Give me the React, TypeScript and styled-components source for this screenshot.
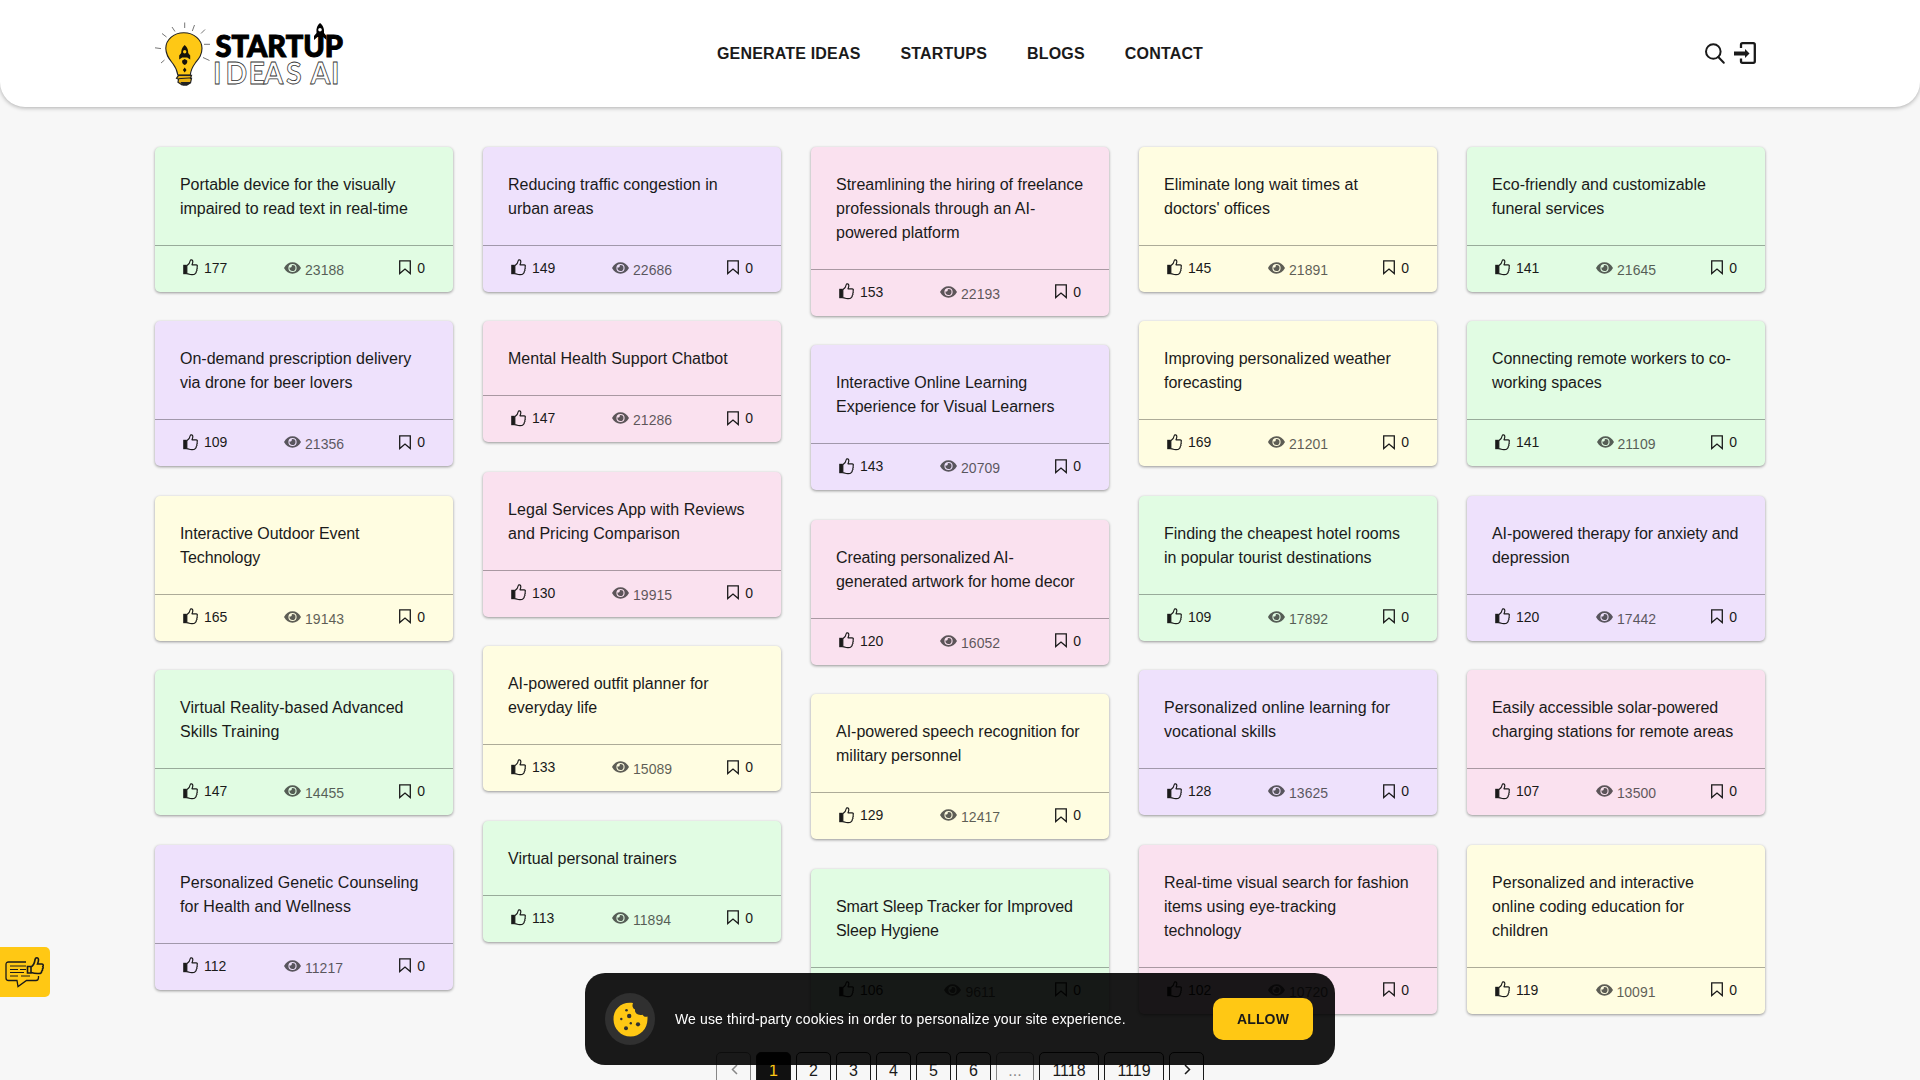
import React from "react";
import styled, { createGlobalStyle } from "styled-components";

const GlobalStyle = createGlobalStyle`
  *, *::before, *::after { box-sizing: border-box; }
  html, body { margin: 0; height: 1080px; overflow: hidden; }
  body {
    background: #f7f7f7;
    color: #1a1a1a;
    font-family: "Liberation Sans", Arial, sans-serif;
    font-size: 16px;
    line-height: 24px;
  }
  svg { display: block; flex: none; overflow: visible; }
`;

const Header = styled.header`
  height: 107px;
  padding: 0 155px;
  display: grid;
  grid-template-columns: 1fr auto 1fr;
  align-items: center;
  background: #fff;
  border-radius: 0 0 25px 25px;
  box-shadow: 0 1px 4px rgba(0, 0, 0, 0.3);
`;

const Nav = styled.nav`
  display: flex;
  gap: 40px;
`;

const NavLink = styled.a`
  font-weight: 700;
  font-size: 16px;
  letter-spacing: 0.18px;
  color: #1a1a1a;
`;

const HeaderActions = styled.div`
  display: flex;
  justify-content: flex-end;
  align-items: center;
  gap: 9px;
  padding-right: 9px;

  svg:last-child {
    margin-bottom: 2px;
  }
`;

const Board = styled.main`
  display: flex;
  align-items: flex-start;
  gap: 30px;
  padding: 39.75px 155px 0;
`;

const Column = styled.div`
  flex: 1 1 0;
  min-width: 0;
  display: flex;
  flex-direction: column;
  gap: 29.75px;
`;

const tones = {
  green: "#e1fce3",
  purple: "#eee1fc",
  pink: "#fae1ef",
  yellow: "#fffde1",
};
type Tone = keyof typeof tones;

const Card = styled.article<{ $tone: Tone }>`
  background: ${(p) => tones[p.$tone]};
  border-radius: 5px;
  box-shadow: 0 1px 3px rgba(0, 0, 0, 0.4);
`;

const CardTitle = styled.h2`
  margin: 0;
  padding: 25.75px 25px 24.25px;
  font-size: 16px;
  line-height: 24px;
  font-weight: 400;
`;

const TitleText = styled.span<{ $tracking: number }>`
  letter-spacing: ${(p) => p.$tracking}px;
`;

const CardFooter = styled.footer`
  height: 46.75px;
  border-top: 1px solid rgba(0, 0, 0, 0.32);
  padding: 0 28px 1.75px;
  display: flex;
  align-items: center;
  justify-content: space-between;
  font-size: 14px;
  line-height: 20px;
`;

const Stat = styled.span<{ $gap: number; $muted?: boolean }>`
  display: flex;
  align-items: center;
  gap: ${(p) => p.$gap}px;
  opacity: ${(p) => (p.$muted ? 0.7 : 1)};
  padding-left: ${(p) => (p.$muted ? 1.5 : 0)}px;
`;

const ViewCount = styled.span`
  padding-top: 3.5px;
`;

const Pagination = styled.nav`
  display: flex;
  justify-content: center;
  gap: 5px;
  padding-top: 38.75px;
`;

const PageButton = styled.button<{ $active?: boolean; $muted?: boolean; $width?: number }>`
  width: ${(p) => p.$width ?? 35}px;
  height: 38px;
  padding: 0;
  display: flex;
  align-items: center;
  justify-content: center;
  font: 16px/24px "Liberation Sans", Arial, sans-serif;
  color: ${(p) => (p.$active ? "#ffc814" : "#1a1a1a")};
  background: ${(p) => (p.$active ? "#111" : "transparent")};
  border: 1px solid #1a1a1a;
  border-radius: 5px;
  opacity: ${(p) => (p.$muted ? 0.5 : 1)};

  svg {
    margin: 0 0 3px 1px;
  }
`;

const FeedbackTab = styled.button`
  position: fixed;
  left: 0;
  top: 947px;
  width: 50px;
  height: 50px;
  padding: 0 0 0 5px;
  border: 0;
  border-radius: 0 5px 5px 0;
  background: #ffc814;
`;

const CookieBar = styled.aside`
  position: fixed;
  left: 585px;
  top: 973px;
  width: 750px;
  height: 92px;
  padding: 0 22px 0 20px;
  display: flex;
  align-items: center;
  background: rgba(0, 0, 0, 0.9);
  border-radius: 20px;
  color: #fff;
  font-size: 14px;
`;

const CookieBadge = styled.div`
  width: 50px;
  height: 52px;
  border-radius: 50%;
  background: #303030;
  display: flex;
  align-items: center;
  justify-content: center;
`;

const CookieText = styled.p`
  margin: 0 auto 0 20px;
  letter-spacing: 0.135px;
`;

const AllowButton = styled.button`
  width: 100px;
  height: 42px;
  border: 0;
  border-radius: 10px;
  background: #ffc814;
  color: #1a1a1a;
  font: 700 14px "Liberation Sans", Arial, sans-serif;
  letter-spacing: 0.15px;
`;

const Logo = () => (
  <svg width="190" height="70" viewBox="155 18.500 190 70" role="img" aria-label="Startup Ideas AI">
    <g stroke="#666" strokeWidth="0.9" fill="none">
      <path d="M184.700 22v5.500M172 26.500l3 4.500M162 33l4.500 3.500M155 47.300l6 .8M161 62.500l3.500-3M194.500 24.500l-2.200 6M205 29l-4 4M204 43.800h6M203 57l6.500 3" />
    </g>
    <path
      d="M183.800 32.300c-10.300 0-18 7-18 15.500 0 7 3.500 10.700 7 15.200 3 4 4.500 7 5 11.500h12.500c.5-5 2-8 5-12 3.500-4.500 6.700-8 6.700-14.700 0-8.500-8-15.500-18.200-15.500z"
      fill="#fec815"
      stroke="#222"
      strokeWidth="1.100"
    />
    <path d="M178.500 74.800h13l-1 3h1l-1 4.500-3.500 2h-5l-4-2.500.5-3-2-1z" fill="#e9b113" stroke="#222" strokeWidth="1.200" />
    <path d="M178.500 78.200l12-.8M181 82h9l-3 2.500h-4z" fill="#222" stroke="#222" strokeWidth="1" />
    <path
      fillRule="evenodd"
      d="M184.700 44.500c-3 2.500-3.500 5.500-3.500 8l-2 2.500v4l3-2h5l3 2v-4l-2-2.500c0-2.500-.5-5.500-3.500-8zM184.700 49.500a1.700 1.700 0 1 0 0 3.400 1.700 1.700 0 0 0 0-3.400z"
      fill="#16120a"
    />
    <path d="M182.200 60c-.5 2 .5 4 2.500 4.500 2-.5 3-2.500 2.500-4.500l-2.500-1.500zM184.700 67l-1.800 2.500 1.800 2.500 1.800-2.500z" fill="#16120a" />
    <text
      x="215.500"
      y="56.500"
      textLength="127.500"
      lengthAdjust="spacingAndGlyphs"
      fontFamily="Lato, sans-serif"
      fontWeight="900"
      fontSize="29.500"
      fill="#000"
      stroke="#000"
      strokeWidth="1"
    >
      STARTUP
    </text>
    <path
      fillRule="evenodd"
      d="M320 22.500c-2.700 2-4 5-3.500 10l-2.500 3v4l3.500-3h1.500v12h2.500v-12h1.500l3.500 3v-4l-2.500-3c.5-5-1.300-8-4-10zM320 27.500a1.800 1.800 0 1 0 0 3.600 1.800 1.800 0 0 0 0-3.600z"
      fill="#000"
    />
    <text
      transform="scale(.92 1)"
      x="231.500 245.100 270.100 286.400 310.900 329.300 337.500 359.800"
      y="83.700"
      fontFamily="Lato, sans-serif"
      fontWeight="700"
      fontSize="31"
      fill="#fff"
      stroke="#333"
      strokeWidth="0.800"
    >
      IDEAS AI
    </text>
  </svg>
);

const SearchIcon = () => (
  <svg width="20" height="21" viewBox="0 0 20 21" fill="none" stroke="#1a1a1a" strokeWidth="2">
    <circle cx="8.300" cy="8.500" r="7.300" />
    <path d="M13.300 14l5.500 5.700" strokeLinecap="round" />
  </svg>
);

const LoginIcon = () => (
  <svg width="22" height="22" viewBox="0 0 22 22" fill="none" stroke="#1a1a1a">
    <path d="M7 6V2.700Q7 1.200 8.500 1.200H19.300Q20.800 1.200 20.800 2.700V19.300Q20.800 20.800 19.300 20.800H8.500Q7 20.800 7 19.300V16.500" strokeWidth="2.300" />
    <path d="M0 11.500h11" strokeWidth="4" />
    <path d="M11 7v9l4.500-4.500z" fill="#1a1a1a" stroke="none" />
  </svg>
);

const LikeIcon = () => (
  <svg width="15" height="17" viewBox="0 0 15 17" fill="none" stroke="#1a1a1a" strokeWidth="1.200" strokeLinejoin="round">
    <path d="M.2 5.800h3.600V15.200H.2z" fill="#1a1a1a" stroke="none" />
    <path d="M3.800 6.800C6.200 5.300 7 3.500 7.300 1.500 7.500.5 9.500.4 9.800 2.200c.2 1.400-.3 2.500-.8 3.600h4c1.400 0 1.700 1.300 1 2.200.5.700.4 1.600-.2 2.200.4.800.2 1.600-.5 2.200.2 1.200-.4 2-1.500 2.700-.8.700-4.300.8-5.500.2-1-.4-1.600-.6-2.500-.7z" />
  </svg>
);

const EyeIcon = () => (
  <svg width="17" height="12" viewBox="0 0 17 12" fill="#1a1a1a">
    <path
      fillRule="evenodd"
      d="M0 6C2 2.300 5 .3 8.500 .3S15 2.300 17 6c-2 3.700-5 5.700-8.500 5.700S2 9.700 0 6zM8.500 1.900a4.100 4.100 0 1 0 0 8.200 4.100 4.100 0 0 0 0-8.200zM8.500 3a3 3 0 1 1-2.900 2.300c.9.700 2.300.2 2.100-1.200-.1-.5.2-1 .8-1.100z"
    />
  </svg>
);

const BookmarkIcon = () => (
  <svg width="12" height="15" viewBox="0 0 12 15" fill="none" stroke="#1a1a1a" strokeWidth="1.300">
    <path d="M.7.9h10.600v12.600L6 9 .7 13.500z" />
  </svg>
);

const CookieIcon = () => (
  <svg width="35" height="35" viewBox="0 0 35 35">
    <path
      d="M20 1C9-1 0 7 .5 17.500.7 27 8 34.500 17.500 34.500S34.500 27 34.500 17v-2.500c-2.500.7-4-.2-5-1.800-4.500 1-8-1.500-7.500-5.200C19.500 6.500 18.800 3.500 20 1z"
      fill="#ffc814"
    />
    <g fill="#303030">
      <circle cx="13.500" cy="8.300" r="1.300" />
      <circle cx="16.200" cy="14" r="2.200" />
      <circle cx="8.300" cy="17" r="1.200" />
      <circle cx="17.800" cy="21.300" r="1.200" />
      <circle cx="25" cy="22.300" r="2.100" />
      <circle cx="13" cy="26.300" r="2" />
    </g>
  </svg>
);

const FeedbackIcon = () => (
  <svg width="40" height="34" viewBox="0 0 40 34" fill="none" stroke="#1a1a1a" strokeWidth="1.300">
    <path d="M21 7H3.500Q1 7 1 9.500V23q0 2.500 2.500 2.500h8.500l1 6 8.500-6H31q2.500 0 2.500-3v-1.500" />
    <path d="M5 11h16M5 14.500h8m2 0h6M5 17.500h14M5 21h8m3 0h9" strokeWidth="1.100" />
    <path
      d="M22.500 11.500h3.500V18h-3.500zM26 12c2.500-1.500 3.500-4 4-7 .3-3 3.500-3 3.500-.3 0 2-.5 3-1 4.300H37c1.500.2 1.500 1.800.8 2.500.6 1 .4 2-.3 2.500.3 1-.2 1.800-.8 2.200 0 1.500-1 2.300-2.700 2.300-3 .2-5.500-.2-8-1z"
      strokeWidth="1.600"
      fill="#ffc814"
    />
  </svg>
);

const Arrow = ({ left }: { left?: boolean }) => (
  <svg width="7" height="11" viewBox="0 0 7 11" fill="none" stroke="#1a1a1a" strokeWidth="1.500">
    <path d={left ? "M6 1L1.500 5.500 6 10" : "M1 1l4.500 4.500L1 10"} />
  </svg>
);

// The optional last value tightens or loosens the title's letters, in pixels.
type Idea = [title: string, tone: Tone, likes: number, views: number, tracking?: number];

const columns: Idea[][] = [
  [
    ["Portable device for the visually impaired to read text in real-time", "green", 177, 23188, -0.05],
    ["On-demand prescription delivery via drone for beer lovers", "purple", 109, 21356],
    ["Interactive Outdoor Event Technology", "yellow", 165, 19143, -0.08],
    ["Virtual Reality-based Advanced Skills Training", "green", 147, 14455, 0.05],
    ["Personalized Genetic Counseling for Health and Wellness", "purple", 112, 11217, 0.06],
  ],
  [
    ["Reducing traffic congestion in urban areas", "purple", 149, 22686],
    ["Mental Health Support Chatbot", "pink", 147, 21286],
    ["Legal Services App with Reviews and Pricing Comparison", "pink", 130, 19915, 0.06],
    ["AI-powered outfit planner for everyday life", "yellow", 133, 15089, -0.05],
    ["Virtual personal trainers", "green", 113, 11894],
  ],
  [
    ["Streamlining the hiring of freelance professionals through an AI-powered platform", "pink", 153, 22193],
    ["Interactive Online Learning Experience for Visual Learners", "purple", 143, 20709],
    ["Creating personalized AI-generated artwork for home decor", "pink", 120, 16052, -0.08],
    ["AI-powered speech recognition for military personnel", "yellow", 129, 12417],
    ["Smart Sleep Tracker for Improved Sleep Hygiene", "green", 106, 9611, -0.1],
  ],
  [
    ["Eliminate long wait times at doctors' offices", "yellow", 145, 21891],
    ["Improving personalized weather forecasting", "yellow", 169, 21201],
    ["Finding the cheapest hotel rooms in popular tourist destinations", "green", 109, 17892, -0.02],
    ["Personalized online learning for vocational skills", "purple", 128, 13625, 0.06],
    ["Real-time visual search for fashion items using eye-tracking technology", "pink", 102, 10720, -0.02],
  ],
  [
    ["Eco-friendly and customizable funeral services", "green", 141, 21645, 0.02],
    ["Connecting remote workers to co-working spaces", "green", 141, 21109, -0.04],
    ["AI-powered therapy for anxiety and depression", "purple", 120, 17442, -0.08],
    ["Easily accessible solar-powered charging stations for remote areas", "pink", 107, 13500, -0.05],
    ["Personalized and interactive online coding education for children", "yellow", 119, 10091, 0.03],
  ],
];

const IdeaCard = ({ idea: [title, tone, likes, views, tracking = 0] }: { idea: Idea }) => (
  <Card $tone={tone}>
    <CardTitle>
      <TitleText $tracking={tracking}>{title}</TitleText>
    </CardTitle>
    <CardFooter>
      <Stat $gap={6}>
        <LikeIcon />
        {likes}
      </Stat>
      <Stat $gap={4} $muted>
        <EyeIcon />
        <ViewCount>{views}</ViewCount>
      </Stat>
      <Stat $gap={6}>
        <BookmarkIcon />0
      </Stat>
    </CardFooter>
  </Card>
);

export default function App() {
  return (
    <>
      <GlobalStyle />
      <Header>
        <Logo />
        <Nav>
          {["GENERATE IDEAS", "STARTUPS", "BLOGS", "CONTACT"].map((label) => (
            <NavLink key={label}>{label}</NavLink>
          ))}
        </Nav>
        <HeaderActions>
          <SearchIcon />
          <LoginIcon />
        </HeaderActions>
      </Header>
      <Board>
        {columns.map((ideas, i) => (
          <Column key={i}>
            {ideas.map((idea) => (
              <IdeaCard key={idea[0]} idea={idea} />
            ))}
          </Column>
        ))}
      </Board>
      <Pagination>
        <PageButton $muted>
          <Arrow left />
        </PageButton>
        <PageButton $active>1</PageButton>
        {[2, 3, 4, 5, 6].map((n) => (
          <PageButton key={n}>{n}</PageButton>
        ))}
        <PageButton $muted $width={38}>
          ...
        </PageButton>
        <PageButton $width={60}>1118</PageButton>
        <PageButton $width={60}>1119</PageButton>
        <PageButton>
          <Arrow />
        </PageButton>
      </Pagination>
      <FeedbackTab aria-label="Feedback">
        <FeedbackIcon />
      </FeedbackTab>
      <CookieBar>
        <CookieBadge>
          <CookieIcon />
        </CookieBadge>
        <CookieText>We use third-party cookies in order to personalize your site experience.</CookieText>
        <AllowButton>ALLOW</AllowButton>
      </CookieBar>
    </>
  );
}
